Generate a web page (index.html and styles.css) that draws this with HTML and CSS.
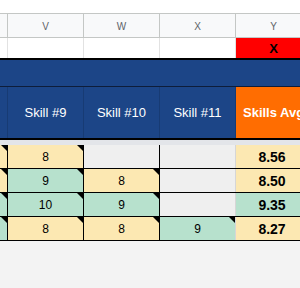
FILE: index.html
```html
<!DOCTYPE html>
<html>
<head>
<meta charset="utf-8">
<link rel="stylesheet" href="styles.css">
</head>
<body>
<div class="sheet">
  <div class="top-strip"></div>
  <div class="row colhead">
    <div class="c"></div>
    <div class="c">V</div>
    <div class="c">W</div>
    <div class="c">X</div>
    <div class="c">Y</div>
  </div>
  <div class="row flagrow">
    <div class="c"></div>
    <div class="c"></div>
    <div class="c"></div>
    <div class="c"></div>
    <div class="c red">X</div>
  </div>
  <div class="band"></div>
  <div class="row skillrow">
    <div class="c"></div>
    <div class="c">Skill #9</div>
    <div class="c">Skill #10</div>
    <div class="c">Skill #11</div>
    <div class="c avg">Skills Avg</div>
  </div>
  <div class="strip"></div>
  <div class="row data">
    <div class="c y t"></div>
    <div class="c y t">8</div>
    <div class="c e"></div>
    <div class="c e"></div>
    <div class="c y s">8.56</div>
  </div>
  <div class="row data">
    <div class="c y t"></div>
    <div class="c g t">9</div>
    <div class="c y t">8</div>
    <div class="c e"></div>
    <div class="c y s">8.50</div>
  </div>
  <div class="row data">
    <div class="c g t"></div>
    <div class="c g t">10</div>
    <div class="c g t">9</div>
    <div class="c e"></div>
    <div class="c g s">9.35</div>
  </div>
  <div class="row data">
    <div class="c g t"></div>
    <div class="c y t">8</div>
    <div class="c y t">8</div>
    <div class="c g t">9</div>
    <div class="c y s">8.27</div>
  </div>
</div>
</body>
</html>
```

FILE: styles.css
```css
html, body {
  margin: 0;
  padding: 0;
  background: #f3f3f3;
}
body {
  width: 300px;
  height: 288px;
  overflow: hidden;
  font-family: "Liberation Sans", Arial, sans-serif;
}
.sheet {
  width: 312px;
}
.top-strip {
  height: 13px;
  background: #ffffff;
}
.row {
  display: grid;
  grid-template-columns: 8px 76px 76px 76px 76px;
}
.c {
  box-sizing: border-box;
  border-right: 1px solid transparent;
  display: flex;
  align-items: center;
  justify-content: center;
  position: relative;
  overflow: hidden;
  white-space: nowrap;
}
.colhead {
  height: 25px;
  box-sizing: border-box;
  border-top: 1px solid #c4c7c5;
  border-bottom: 1px solid #c4c7c5;
  background: #f8f9fa;
}
.colhead .c {
  border-right-color: #c4c7c5;
  font-size: 10px;
  color: #5f6368;
  padding-top: 1px;
}
.flagrow {
  height: 22px;
  box-sizing: border-box;
  border-bottom: 2px solid #000;
  background: #fff;
}
.flagrow .c {
  border-right-color: #e2e2e2;
}
.flagrow .red {
  background: #ff0000;
  color: #000;
  font-size: 13px;
  font-weight: bold;
}
.band {
  height: 27px;
  box-sizing: border-box;
  background: #1c4587;
  border-bottom: 1px solid #0e1d3a;
}
.skillrow {
  height: 53px;
  box-sizing: border-box;
  background: #1c4587;
  border-bottom: 2px solid #000;
}
.skillrow .c {
  border-right-color: #173b74;
  color: #fff;
  font-size: 13px;
}
.skillrow .avg {
  background: #ff6d01;
  font-weight: bold;
  justify-content: flex-start;
  padding-left: 7px;
}
.strip {
  height: 5px;
  background: #e3e5e9;
}
.data {
  height: 24px;
  box-sizing: border-box;
  border-bottom: 1px solid #000;
}
.data .c {
  border-right-color: #000;
  font-size: 12px;
  color: #000;
}
.data .c:nth-child(4) {
  border-right-color: #d6d6d6;
}
.y { background: #fce8b2; }
.g { background: #b7e1cd; }
.e { background: #efefef; }
.data .s {
  font-size: 14px;
  font-weight: bold;
  padding-right: 3px;
}
.t::after {
  content: "";
  position: absolute;
  top: 0;
  right: 0;
  width: 0;
  height: 0;
  border-top: 6px solid #000;
  border-left: 6px solid transparent;
}
```
